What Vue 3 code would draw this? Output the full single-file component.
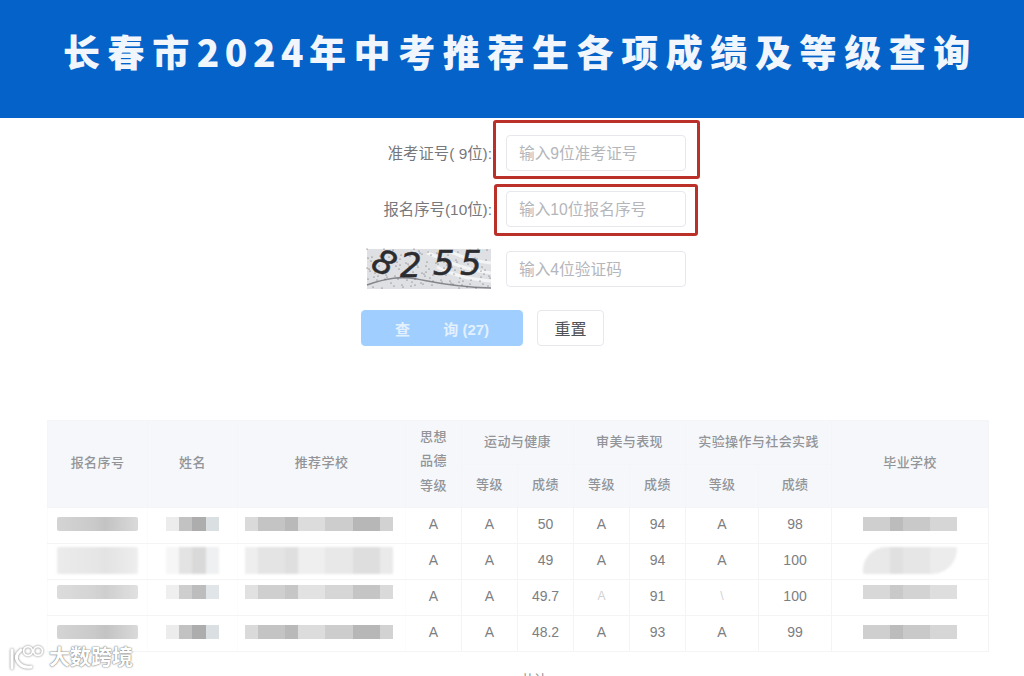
<template>
  <div class="page">
    <header class="banner">
      <h1>长春市<span class="year">2024</span>年中考推荐生各项成绩及等级查询</h1>
    </header>

    <form class="query-form" @submit.prevent>
      <div class="field">
        <label>准考证号( 9位):</label>
        <div class="input-wrap">
          <input type="text" placeholder="输入9位准考证号" />
          <span class="mark mark-first"></span>
        </div>
      </div>
      <div class="field">
        <label>报名序号(10位):</label>
        <div class="input-wrap">
          <input type="text" placeholder="输入10位报名序号" />
          <span class="mark mark-second"></span>
        </div>
      </div>
      <div class="field field-code">
        <svg class="captcha" width="124" height="40" viewBox="0 0 124 40">
          <rect width="124" height="40" fill="#dfe0e3" />
          <path d="M0 36C20 29 34 27 50 30S84 38 124 39" fill="none" stroke="#85878c" stroke-width="1.6" />
          <path d="M60 4C78 10 92 20 124 24M82 2C94 8 106 12 124 14M70 18C86 26 100 30 124 32" fill="none" stroke="#f3f4f5" stroke-width="3" />
          <circle v-for="d in dots" :key="d.id" :cx="d.x" :cy="d.y" r="0.6" fill="#55575c" />
          <text x="6" y="26" transform="rotate(28 18 15)" class="digit">8</text>
          <text x="33" y="28" class="digit">2</text>
          <text x="66" y="26" class="digit">5</text>
          <text x="93" y="26" class="digit">5</text>
        </svg>
        <div class="input-wrap">
          <input type="text" placeholder="输入4位验证码" />
        </div>
      </div>
      <div class="actions">
        <button type="button" class="btn-query">查&nbsp;&nbsp;&nbsp;&nbsp;&nbsp;&nbsp;&nbsp;&nbsp;询 (27)</button>
        <button type="button" class="btn-reset">重置</button>
      </div>
    </form>

    <table class="result">
      <colgroup>
        <col v-for="(w, i) in colWidths" :key="i" :style="{ width: w + 'px' }" />
      </colgroup>
      <thead>
        <tr>
          <th rowspan="2">报名序号</th>
          <th rowspan="2">姓名</th>
          <th rowspan="2">推荐学校</th>
          <th rowspan="2" class="stacked">思想<br />品德<br />等级</th>
          <th colspan="2">运动与健康</th>
          <th colspan="2">审美与表现</th>
          <th colspan="2">实验操作与社会实践</th>
          <th rowspan="2">毕业学校</th>
        </tr>
        <tr class="sub-head">
          <th v-for="(h, i) in subHeads" :key="i">{{ h }}</th>
        </tr>
      </thead>
      <tbody>
        <tr v-for="row in rows" :key="row.id" :class="row.tone">
          <td><span class="blur blur-serial"></span></td>
          <td><span class="blur blur-name"></span></td>
          <td><span class="blur blur-school"></span></td>
          <td v-for="(v, i) in row.values" :key="i" :class="{ faint: row.faint?.includes(i) }">{{ v }}</td>
          <td><span class="blur blur-grad"></span></td>
        </tr>
      </tbody>
    </table>

    <p class="footnote">共计</p>

    <div class="watermark">
      <svg width="40" height="26" viewBox="0 0 40 26" fill="none">
        <g stroke="#fff" stroke-linecap="round">
          <path d="M6 6V24" stroke-width="3" />
          <path d="M15 6C10 10 9 14 12 18S19 24 25 23" stroke-width="3" />
          <circle cx="22" cy="7" r="4.4" stroke-width="1.8" />
          <circle cx="32" cy="7" r="4.4" stroke-width="1.8" />
        </g>
      </svg>
      <span>大数跨境</span>
    </div>
  </div>
</template>

<script setup>
const colWidths = [100, 90, 168, 56, 56, 56, 56, 56, 73, 73, 157]
const subHeads = ['等级', '成绩', '等级', '成绩', '等级', '成绩']

const rows = [
  { id: 1, tone: 'solid', values: ['A', 'A', '50', 'A', '94', 'A', '98'] },
  { id: 2, tone: 'smeared', values: ['A', 'A', '49', 'A', '94', 'A', '100'] },
  { id: 3, tone: 'raised', faint: [3, 5], values: ['A', 'A', '49.7', 'A', '91', '\\', '100'] },
  { id: 4, tone: 'solid', values: ['A', 'A', '48.2', 'A', '93', 'A', '99'] }
]

// speckle for the captcha background
const dots = Array.from({ length: 140 }, (_, i) => ({
  id: i,
  x: (i * 37 + (i % 7) * 11) % 124,
  y: (i * 23 + (i % 5) * 13) % 40
}))
</script>

<style>
html,
body {
  margin: 0;
  background: #fff;
  overflow: hidden;
}
</style>

<style scoped>
.page {
  position: relative;
  width: 1024px;
  height: 676px;
  overflow: hidden;
  background: #fff;
  font-family: "Liberation Sans", "Noto Sans CJK SC", sans-serif;
  font-size: 14px;
  color: #606266;
}

.banner {
  height: 118px;
  box-sizing: border-box;
  padding: 27px 0 0 63px;
  background: #0562c8;
}

.banner h1 {
  margin: 0;
  font-family: "Noto Sans CJK SC", sans-serif;
  font-size: 37px;
  line-height: 48px;
  font-weight: 900;
  letter-spacing: 7.6px;
  white-space: nowrap;
  color: #f1f6fc;
}

.year {
  letter-spacing: 5.5px;
}

.query-form {
  display: flex;
  flex-direction: column;
  gap: 20px;
  width: 325px;
  margin: 17px 0 0 361px;
}

.field {
  display: flex;
  align-items: center;
  justify-content: flex-end;
  gap: 14px;
  height: 36px;
}

.field-code {
  margin-top: 4px;
}

.field label {
  margin-bottom: 2px;
  white-space: nowrap;
  font-size: 15.4px;
  color: #76787c;
}

.input-wrap {
  position: relative;
  width: 180px;
  height: 36px;
}

.input-wrap input {
  width: 100%;
  height: 100%;
  box-sizing: border-box;
  padding: 1px 12px 0;
  border: 1px solid #e6e8ec;
  border-radius: 4px;
  outline: none;
  font: inherit;
  font-size: 15.7px;
  color: #606266;
}

.input-wrap input::placeholder {
  color: #b4b6bb;
}

.mark {
  position: absolute;
  box-sizing: border-box;
  border: 3px solid #bb3029;
  border-radius: 3px;
  pointer-events: none;
}

.mark-first {
  left: -13px;
  top: -15px;
  width: 207px;
  height: 59px;
}

.mark-second {
  left: -12px;
  top: -7px;
  width: 204px;
  height: 52px;
}

.captcha {
  display: block;
  overflow: visible;
  margin-right: 1px;
}

.digit {
  font-family: "DejaVu Sans", sans-serif;
  font-size: 34px;
  font-style: italic;
  fill: #2b2c30;
  stroke: #2b2c30;
  stroke-width: 0.5px;
}

.actions {
  display: flex;
  gap: 14px;
  margin-top: 3px;
}

.actions button {
  height: 36px;
  border-radius: 4px;
  font: inherit;
}

.actions .btn-query {
  width: 162px;
  border: 1px solid #a0cfff;
  background: #a0cfff;
  color: #e3f0fe;
  font-size: 15px;
  font-weight: 700;
}

.actions .btn-reset {
  width: 67px;
  border: 1px solid #e6e8ec;
  background: #fff;
  color: #505256;
  font-size: 16px;
}

.result {
  width: 941px;
  margin: 74px 0 0 47px;
  border-collapse: collapse;
  table-layout: fixed;
  border: 1px solid #f1f2f5;
}

.result th {
  height: 44px;
  padding: 0 0 5px;
  box-sizing: border-box;
  background: #f5f7fb;
  border: 1px solid #f4f5f9;
  font-size: 13px;
  font-weight: 500;
  letter-spacing: 0.4px;
  color: #929498;
  text-align: center;
}

.result .sub-head th {
  height: 43px;
}

.result th.stacked {
  line-height: 24.5px;
}

.result td {
  height: 36px;
  padding: 0 0 3px;
  box-sizing: border-box;
  border: 1px solid #f3f4f6;
  color: #7c7e82;
  text-align: center;
}

.result td:nth-child(-n+3) {
  border-left-color: #fcfcfc;
  border-right-color: #fcfcfc;
}

.result td.faint {
  color: #d0d2d5;
  font-size: 12px;
}

.blur {
  display: block;
  height: 14px;
  margin: 0 auto;
  filter: blur(0.5px);
}

.blur-serial {
  width: 81px;
  border-radius: 2px;
  background: linear-gradient(90deg, #d4d4d4, #cacaca 45%, #c3c3c3 60%, #dadada);
}

.blur-name {
  width: 53px;
  background: linear-gradient(90deg, #ececec 0 25%, #c2c2c2 25% 50%, #adadad 50% 75%, #dadfe2 75%);
}

.blur-school {
  width: 148px;
  margin-left: 7px;
  background: linear-gradient(90deg, #dadada 0 9%, #c4c4c4 9% 27%, #b9b9b9 27% 36%, #dcdcdc 36% 54%, #cdcdcd 54% 73%, #b7b7b7 73% 91%, #d2d2d2 91%);
}

.blur-grad {
  width: 94px;
  background: linear-gradient(90deg, #cfcfcf 0 29%, #bcbcbc 29% 43%, #c9c9c9 43% 71%, #d6d6d6 71%);
}

.smeared .blur {
  height: 27px;
  opacity: 0.45;
  filter: blur(1px);
}

.smeared .blur-grad {
  border-radius: 24px 2px 26px 2px;
}

.raised .blur {
  margin-bottom: 8px;
  opacity: 0.8;
}

.footnote {
  margin: 19px 0 0 521px;
  font-size: 13px;
  line-height: 18px;
  color: #8a8c90;
}

.watermark {
  position: absolute;
  left: 6px;
  top: 643px;
  display: flex;
  align-items: center;
  gap: 3px;
  font-size: 21px;
  line-height: 28px;
  font-weight: 700;
  color: #fff;
  text-shadow: 0 0 2px #777, 0 0 1px #777;
}

.watermark svg {
  filter: drop-shadow(0 0 1px #777);
}
</style>
